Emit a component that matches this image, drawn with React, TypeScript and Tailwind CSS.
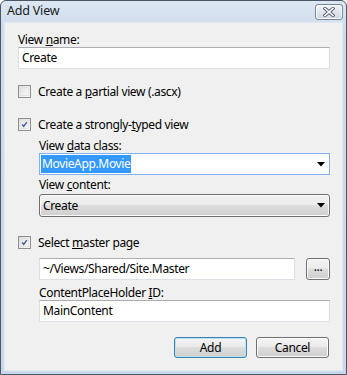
const font = { fontFamily: '"Noto Sans", "Open Sans", sans-serif' }

function Check({ checked }: { checked: boolean }) {
  return (
    <span className="flex h-[13px] w-[13px] shrink-0 items-center justify-center border border-[#8f8f8f] bg-gradient-to-br from-[#dcdcdc] to-[#fbfbfb]">
      <span className="flex h-[9px] w-[9px] items-center justify-center border border-[#e3e3e3] bg-gradient-to-br from-[#e4e4e4] to-[#f7f7f7]">
        {checked && (
          <svg width="9" height="9" viewBox="0 0 9 9">
            <path d="M1.5 4.5 L3.5 7 L7.5 1.5" fill="none" stroke="#3f5a94" strokeWidth="1.8" />
          </svg>
        )}
      </span>
    </span>
  )
}

function Arrow() {
  return (
    <svg width="8" height="5" viewBox="0 0 8 5" className="shrink-0">
      <path d="M0 0 H8 L4 4.5 Z" fill="#000" />
    </svg>
  )
}

function TextBox({ value, className = '' }: { value: string; className?: string }) {
  return (
    <div className={`flex h-[22px] items-center border border-[#dbdfe6] border-t-[#abadb3] bg-white pl-[3px] text-black ${className}`}>
      {value}
    </div>
  )
}

function Button({ label, primary = false, className = '' }: { label: string; primary?: boolean; className?: string }) {
  return (
    <div
      className={`flex items-center justify-center rounded-[3px] border bg-[linear-gradient(#f4f4f4,#ebebeb_45%,#dddddd_50%,#cfcfcf)] text-black ${
        primary ? 'border-[#3c7fb1] shadow-[inset_0_0_0_1px_#b6e4f9]' : 'border-[#707070] shadow-[inset_0_0_0_1px_#fcfcfc]'
      } ${className}`}
    >
      {label}
    </div>
  )
}

export default function App() {
  return (
    <div style={font} className="h-[375px] w-[347px] bg-white">
      <div className="flex h-full w-full flex-col rounded-t-[6px] border border-[#4e5663] bg-[linear-gradient(#dce7f4,#cddbeb_30px,#c9d8ea)]">
        {/* title bar */}
        <div className="flex h-[21px] items-center justify-between pl-[6px] pr-[3px]">
          <span className="text-[12.5px] tracking-[-0.2px] text-[#1b1b1b]">Add View</span>
          <div className="flex h-[16px] w-[28px] items-center justify-center rounded-[3px] border border-[#7c8796] bg-[linear-gradient(#f2f5f9,#dfe6ee_50%,#cfd8e3)] shadow-[inset_0_0_0_1px_#f6f8fb]">
            <svg width="12" height="10" viewBox="0 0 12 10">
              <path d="M2 1.5 L10 8.5 M10 1.5 L2 8.5" stroke="#4f5b6b" strokeWidth="3.4" strokeLinecap="square" />
              <path d="M2 1.5 L10 8.5 M10 1.5 L2 8.5" stroke="#ffffff" strokeWidth="1.6" strokeLinecap="square" />
            </svg>
          </div>
        </div>

        {/* content */}
        <div className="mx-[3px] mb-[3px] flex flex-1 flex-col border border-[#e2e9f2] bg-[#f0f0f0] pl-[13px] pr-[12px] pt-[9px] text-[12px] tracking-[-0.35px] text-black">
          <div className="h-[15px] leading-[15px]">
            View <u>n</u>ame:
          </div>
          <TextBox value="Create" />

          <div className="mt-[15px] flex h-[15px] items-center gap-[7px]">
            <Check checked={false} />
            <span>
              Create a <u>p</u>artial view (.ascx)
            </span>
          </div>

          <div className="mt-[18px] flex h-[15px] items-center gap-[7px]">
            <Check checked={true} />
            <span>
              Create a strongly-<u>t</u>yped view
            </span>
          </div>

          <div className="ml-[21px] flex flex-col">
            <div className="mt-[6px] h-[15px] leading-[15px]">
              View <u>d</u>ata class:
            </div>
            <div className="flex h-[22px] items-center justify-between border border-[#7eb4ea] bg-white pl-[1px] pr-[4px]">
              <span className="flex h-[18px] items-center bg-[#3399ff] px-[1px] text-white">MovieApp.Movie</span>
              <Arrow />
            </div>
            <div className="mt-[2px] h-[15px] leading-[15px]">
              View <u>c</u>ontent:
            </div>
            <div className="mt-[2px] flex h-[23px] items-center justify-between rounded-[3px] border border-[#707070] bg-[linear-gradient(#f2f2f2,#ebebeb_45%,#dddddd_50%,#cfcfcf)] pl-[3px] pr-[4px] shadow-[inset_0_0_0_1px_#fcfcfc]">
              <span>Create</span>
              <Arrow />
            </div>
          </div>

          <div className="mt-[18px] flex h-[15px] items-center gap-[7px]">
            <Check checked={true} />
            <span>
              Select <u>m</u>aster page
            </span>
          </div>

          <div className="ml-[21px] flex flex-col">
            <div className="mt-[8px] flex gap-[11px]">
              <TextBox value="~/Views/Shared/Site.Master" className="flex-1" />
              <Button label="..." className="h-[22px] w-[24px] pb-[4px]" />
            </div>
            <div className="mt-[5px] h-[15px] leading-[15px]">
              ContentPlaceHolder <u>I</u>D:
            </div>
            <TextBox value="MainContent" />
          </div>

          <div className="mt-[15px] flex justify-end gap-[9px] pr-[1px]">
            <Button label="Add" primary className="h-[21px] w-[73px]" />
            <Button label="Cancel" className="h-[21px] w-[73px]" />
          </div>
        </div>
      </div>
    </div>
  )
}
